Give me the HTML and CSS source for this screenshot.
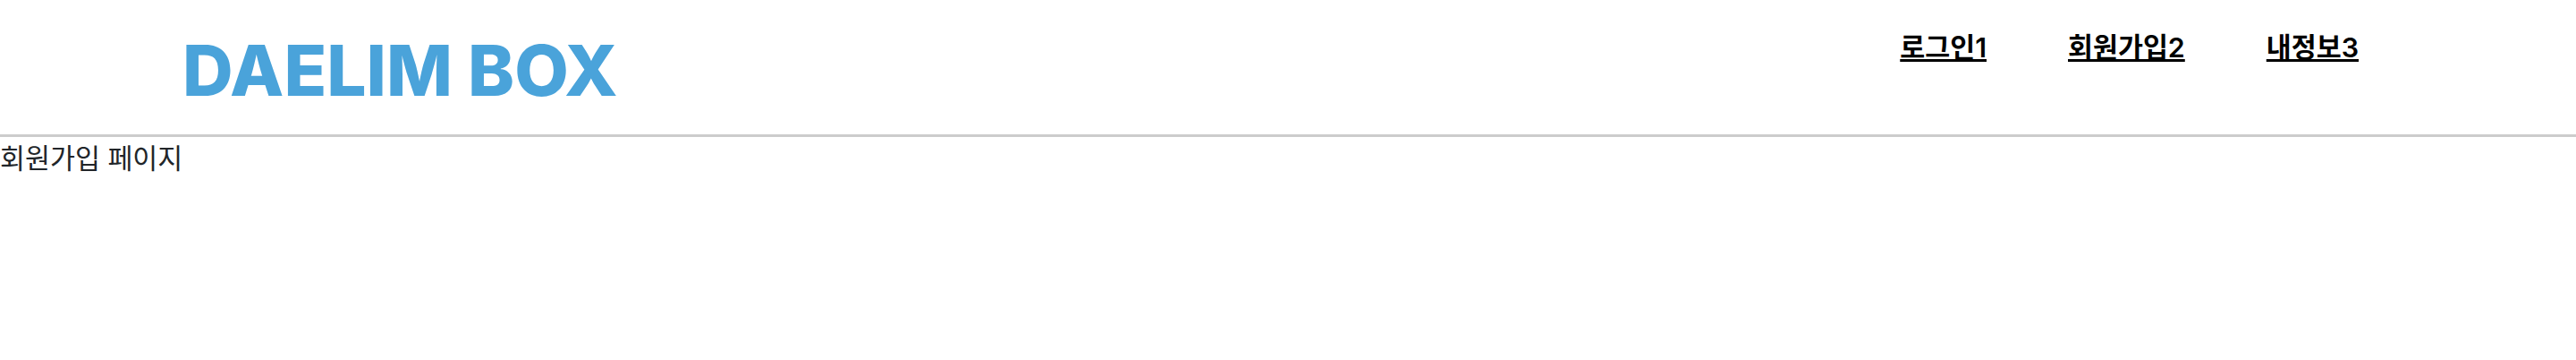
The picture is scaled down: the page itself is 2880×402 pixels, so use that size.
FILE: index.html
```html
<!DOCTYPE html>
<html lang="ko">
<head>
    <meta charset="UTF-8">
    <title>DAELIM BOX</title>
    <link rel="stylesheet" href="styles.css">
</head>
<body>
    <header class="header">
        <a class="logo" href="#">DAELIM BOX</a>
        <nav class="nav">
            <a href="#">로그인1</a>
            <a href="#">회원가입2</a>
            <a href="#">내정보3</a>
        </nav>
    </header>
    <main class="content">회원가입 페이지</main>
</body>
</html>
```
FILE: styles.css
```css
body {
    margin: 0;
    font-family: Inter, "Noto Sans CJK KR", sans-serif;
    background-color: #fff;
    color: #212529;
}
.header {
    display: flex;
    justify-content: space-between;
    align-items: flex-start;
    height: 150px;
    padding: 0 243px 0 204px;
    border-bottom: 3px solid #ccc;
}
.logo {
    margin-top: 31px;
    font-size: 78.4px;
    line-height: 95px;
    font-weight: 800;
    color: #4aa3da;
    text-decoration: none;
}
.nav {
    display: flex;
    gap: 91px;
    margin-top: 34px;
}
.nav a {
    font-size: 30.4px;
    line-height: 38px;
    font-weight: 600;
    color: #000;
    text-decoration: underline;
}
.content {
    font-size: 30.4px;
    line-height: 48px;
}
```
